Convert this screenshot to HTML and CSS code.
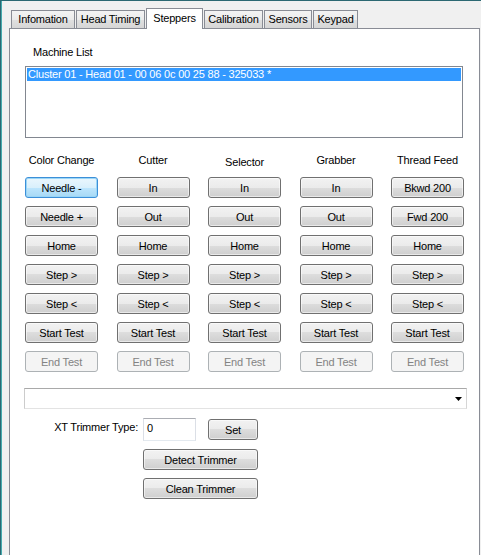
FILE: index.html
```html
<!DOCTYPE html>
<html>
<head>
<meta charset="utf-8">
<title>Steppers</title>
<link rel="stylesheet" href="styles.css">
</head>
<body>
<div class="window">
  <div class="tabs">
    <div class="tab t-info">Infomation</div>
    <div class="tab t-head">Head Timing</div>
    <div class="tab t-step selected">Steppers</div>
    <div class="tab t-cal">Calibration</div>
    <div class="tab t-sen">Sensors</div>
    <div class="tab t-key">Keypad</div>
  </div>
  <div class="panel">
    <div class="machine-label">Machine List</div>
    <div class="listbox">
      <div class="item">Cluster 01 - Head 01 - 00 06 0c 00 25 88 - 325033 *</div>
    </div>

    <div class="stepper-grid">
      <div class="col-head">Color Change</div>
      <div class="col-head">Cutter</div>
      <div class="col-head lower">Selector</div>
      <div class="col-head">Grabber</div>
      <div class="col-head">Thread Feed</div>

      <button class="btn focused">Needle -</button>
      <button class="btn">In</button>
      <button class="btn">In</button>
      <button class="btn">In</button>
      <button class="btn">Bkwd 200</button>

      <button class="btn">Needle +</button>
      <button class="btn">Out</button>
      <button class="btn">Out</button>
      <button class="btn">Out</button>
      <button class="btn">Fwd 200</button>

      <button class="btn">Home</button>
      <button class="btn">Home</button>
      <button class="btn">Home</button>
      <button class="btn">Home</button>
      <button class="btn">Home</button>

      <button class="btn">Step &gt;</button>
      <button class="btn">Step &gt;</button>
      <button class="btn">Step &gt;</button>
      <button class="btn">Step &gt;</button>
      <button class="btn">Step &gt;</button>

      <button class="btn">Step &lt;</button>
      <button class="btn">Step &lt;</button>
      <button class="btn">Step &lt;</button>
      <button class="btn">Step &lt;</button>
      <button class="btn">Step &lt;</button>

      <button class="btn">Start Test</button>
      <button class="btn">Start Test</button>
      <button class="btn">Start Test</button>
      <button class="btn">Start Test</button>
      <button class="btn">Start Test</button>

      <button class="btn" disabled>End Test</button>
      <button class="btn" disabled>End Test</button>
      <button class="btn" disabled>End Test</button>
      <button class="btn" disabled>End Test</button>
      <button class="btn" disabled>End Test</button>
    </div>

    <div class="combo">
      <svg class="arrow" width="7" height="4" viewBox="0 0 7 4"><polygon points="0,0 7,0 3.5,4" fill="#000"/></svg>
    </div>

    <div class="trimmer">
      <div class="trim-label">XT Trimmer Type:</div>
      <div class="textbox">0</div>
      <button class="btn set-btn">Set</button>
      <button class="btn wide">Detect Trimmer</button>
      <button class="btn wide">Clean Trimmer</button>
    </div>
  </div>
</div>
</body>
</html>
```
FILE: styles.css
```css
* { box-sizing: border-box; }
html, body { margin: 0; padding: 0; }
body {
  width: 481px;
  height: 555px;
  overflow: hidden;
  background: #f0f0f0;
  font-family: "Liberation Sans", Arial, sans-serif;
  font-size: 11px;
  letter-spacing: -0.2px;
  color: #000;
}
.window {
  height: 555px;
  border-top: 1px solid #2b6872;
  border-left: 1px solid #2b6872;
  box-shadow: inset 1px 0 0 #46abae;
  padding-left: 8px;
}
.tabs {
  display: flex;
  align-items: flex-end;
  gap: 1px;
  height: 27px;
  padding-left: 2px;
}
.tab {
  height: 18px;
  line-height: 17px;
  text-align: center;
  white-space: nowrap;
  border: 1px solid #898c95;
  border-bottom: none;
  background: linear-gradient(#f3f3f3, #ebebeb 50%, #e0e0e0 50%, #d6d6d6);
}
.tab.selected {
  position: relative;
  z-index: 1;
  height: 21px;
  line-height: 18px;
  margin-bottom: -1px;
  background: #fff;
}
.t-info { width: 64px; }
.t-head { width: 69px; }
.t-step { width: 57px; }
.t-cal { width: 59px; }
.t-sen { width: 48px; }
.t-key { width: 45px; }

.panel {
  width: 471px;
  height: 540px;
  border: 1px solid #898c95;
  background: #fff;
  overflow: hidden;
}
.machine-label {
  margin: 17px 0 0 23px;
  line-height: 13px;
}
.listbox {
  margin: 7px 0 0 15px;
  width: 438px;
  height: 72px;
  border: 1px solid #828790;
  padding: 1px;
}
.item {
  height: 13px;
  line-height: 13px;
  padding-left: 1px;
  background: #3399ff;
  color: #fff;
  white-space: nowrap;
}
.stepper-grid {
  margin: 16px 0 0 15px;
  display: grid;
  grid-template-columns: repeat(5, 73px);
  column-gap: 18.5px;
  row-gap: 8px;
}
.col-head {
  height: 15px;
  line-height: 13px;
  text-align: center;
  white-space: nowrap;
}
.col-head.lower { line-height: 17px; }

.btn {
  display: block;
  height: 21px;
  padding: 0;
  margin: 0;
  font: inherit;
  letter-spacing: inherit;
  color: #000;
  line-height: 20px;
  text-align: center;
  white-space: nowrap;
  border: 1px solid #707070;
  border-radius: 3px;
  background: linear-gradient(#f2f2f2, #ebebeb 50%, #dddddd 50%, #cfcfcf);
  box-shadow: inset 0 0 0 1px rgba(255, 255, 255, 0.55);
}
.btn.focused {
  border-color: #3c8fd8;
  background: linear-gradient(#eaf6fd, #d9f0fc 50%, #bee6fd 50%, #a7d9f5);
  box-shadow: inset 0 0 0 1px #9ad6f7;
}
.btn:disabled {
  color: #838383;
  border-color: #adb2b5;
  background: #f4f4f4;
  box-shadow: none;
}
.combo {
  margin: 16px 0 0 14px;
  width: 443px;
  height: 21px;
  border: 1px solid #cccccc;
  border-top-color: #a9a9a9;
  border-right-color: #d6d6d6;
  border-bottom-color: #e3e3e3;
  display: flex;
  justify-content: flex-end;
  align-items: center;
  padding-right: 4px;
}
.arrow { display: block; }

.trimmer {
  margin: 9px 0 0 1px;
  display: grid;
  grid-template-columns: 132px 65px 50px;
  grid-template-rows: 23px 21px 21px;
  row-gap: 8px;
}
.trim-label {
  align-self: start;
  padding: 3px 5px 0 0;
  line-height: 13px;
  text-align: right;
  white-space: nowrap;
}
.textbox {
  width: 53px;
  height: 23px;
  padding: 3px 0 0 3px;
  line-height: 13px;
  border: 1px solid #dbdfe6;
  border-top-color: #abadb3;
  border-bottom-color: #e3e9ef;
}
.set-btn { align-self: center; }
.wide {
  grid-column: 2 / 4;
}
```
